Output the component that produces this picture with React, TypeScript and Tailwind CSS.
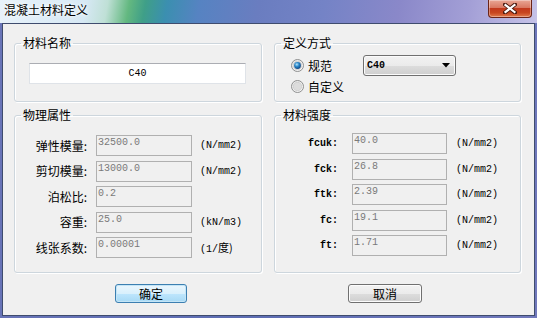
import React from "react";

const cjk = "font-['Noto_Sans_CJK_SC','Noto_Sans',sans-serif]";
const mono = "font-['Liberation_Mono',monospace]";

function Radio({ checked }: { checked: boolean }) {
  return (
    <svg width="13" height="13" viewBox="0 0 13 13" className="shrink-0">
      <defs>
        <linearGradient id={checked ? "rgc" : "rgu"} x1="0" y1="0" x2="1" y2="1">
          <stop offset="0" stopColor="#e6e6e6" />
          <stop offset="1" stopColor="#f8f8f8" />
        </linearGradient>
        <radialGradient id="dot" cx="0.4" cy="0.35" r="0.7">
          <stop offset="0" stopColor="#b6e4fb" />
          <stop offset="0.45" stopColor="#2b88c9" />
          <stop offset="1" stopColor="#0d3f7d" />
        </radialGradient>
      </defs>
      <circle cx="6.5" cy="6.5" r="6" fill={`url(#${checked ? "rgc" : "rgu"})`} stroke="#8e8f8f" strokeWidth="1" />
      <circle cx="6.5" cy="6.5" r="4.2" fill="#dcdcdc" stroke="#c4c4c4" strokeWidth="0.6" />
      {checked && <circle cx="6.5" cy="6.5" r="3.4" fill="url(#dot)" />}
    </svg>
  );
}

function Field({
  label,
  value,
  unit,
  labelCls,
  labelW,
  inputW,
  gapL,
  gapU,
}: {
  label: string;
  value: string;
  unit?: string;
  labelCls: string;
  labelW: string;
  inputW: string;
  gapL: string;
  gapU: string;
}) {
  return (
    <div className="flex items-center h-[21px]">
      <div className={`${labelW} text-right ${labelCls} text-black whitespace-pre`}>{label}</div>
      <div
        className={`${gapL} ${inputW} h-[21px] border border-[#b0b0b0] bg-[#f0f0f0] pl-[1px] ${mono} text-[10px] leading-[13px] text-[#7a7a7a]`}
      >
        {value}
      </div>
      {unit && (
        <div className={`${gapU} ${unit.includes("度") ? cjk + " text-[11px]" : mono + " text-[10px]"} text-black whitespace-pre`}>
          {unit.includes("度") ? (
            <span>
              <span className={`${mono} text-[10px]`}>(1/</span>度)
            </span>
          ) : (
            unit
          )}
        </div>
      )}
    </div>
  );
}

function Group({ title, h, children }: { title: string; h: string; children: React.ReactNode }) {
  return (
    <fieldset className={`${h} border border-[#cdd6dd] rounded-[3px] shadow-[inset_1px_1px_0_#ffffff,1px_1px_0_#ffffff] px-0`}>
      <legend className={`ml-[6px] px-[2px] ${cjk} text-[12px] leading-[16px] text-black`}>{title}</legend>
      {children}
    </fieldset>
  );
}

export default function App() {
  const leftRows = [
    ["弹性模量:", "32500.0", "(N/mm2)"],
    ["剪切模量:", "13000.0", "(N/mm2)"],
    ["泊松比:", "0.2", ""],
    ["容重:", "25.0", "(kN/m3)"],
    ["线张系数:", "0.00001", "(1/度)"],
  ];
  const rightRows = [
    ["fcuk:", "40.0"],
    ["fck:", "26.8"],
    ["ftk:", "2.39"],
    ["fc:", "19.1"],
    ["ft:", "1.71"],
  ];
  return (
    <div className="w-[537px] h-[318px] overflow-hidden bg-[linear-gradient(100deg,#6a75b8_0%,#5d6db3_50%,#7078bb_100%)] flex flex-col">
      {/* Title bar */}
      <div className="h-[23px] shrink-0 flex items-start justify-between bg-[linear-gradient(100deg,#e8f2fa_0%,#d6e8f4_16%,#bfe0d6_20%,#63b880_24%,#3f9f88_27%,#3b8fb0_31%,#5683c2_37%,#6a7dc0_48%,#7483c6_60%,#8a88c9_74%,#a39fd6_87%,#c6c3e8_100%)] pr-[5px]">
        <div className={`pl-[4px] pt-[2px] ${cjk} text-[12px] leading-[16px] text-black [text-shadow:0_0_6px_#ffffff,0_0_3px_#ffffff]`}>
          混凝土材料定义
        </div>
        <div className="w-[44px] h-[18px] rounded-b-[4px] border border-t-0 border-[#6b2418] bg-[linear-gradient(180deg,#e9a795_0%,#d97861_45%,#c2391c_50%,#c8461f_75%,#e07a4c_100%)] flex items-center justify-center shadow-[inset_0_0_0_1px_rgba(255,255,255,0.35)]">
          <svg width="14" height="11" viewBox="0 0 14 11">
            <path d="M2 1.5 L12 9.5 M12 1.5 L2 9.5" stroke="#4a1a10" strokeWidth="4" strokeLinecap="square" />
            <path d="M2.5 2 L11.5 9 M11.5 2 L2.5 9" stroke="#ffffff" strokeWidth="2.2" strokeLinecap="square" />
          </svg>
        </div>
      </div>

      {/* Client */}
      <div className="mx-[2px] h-[293px] border border-[#3f4c6e] bg-[#f0f0f0] pt-[11px] pl-[11px]">
        <div className="grid grid-cols-[248px_247px] gap-x-[12px] gap-y-[5px]">
          <Group title="材料名称" h="h-[67px]">
            <div className="pt-[12px] pl-[14px]">
              <div className={`w-[217px] h-[21px] bg-white border border-[#dfe3e8] border-t-[#abadb3] flex items-center justify-center ${mono} text-[10px] text-black`}>
                C40
              </div>
            </div>
          </Group>
          <Group title="定义方式" h="h-[67px]">
            <div className="pt-[4px] pl-[16px]">
              <div className="flex items-center h-[21px]">
                <Radio checked />
                <span className={`ml-[4px] ${cjk} text-[12px] text-black`}>规范</span>
                <div className="ml-[31px] w-[93px] h-[21px] rounded-[3px] border border-[#707070] bg-[linear-gradient(180deg,#f2f2f2_0%,#ebebeb_50%,#dddddd_51%,#cfcfcf_100%)] flex items-center justify-between pl-[3px] pr-[5px] shadow-[inset_0_0_0_1px_#fbfbfb]">
                  <span className={`${mono} text-[10px] font-bold text-black`}>C40</span>
                  <svg width="8" height="5" viewBox="0 0 8 5">
                    <path d="M0 0 H8 L4 4.5 Z" fill="#000" />
                  </svg>
                </div>
              </div>
              <div className="flex items-center h-[21px]">
                <Radio checked={false} />
                <span className={`ml-[4px] ${cjk} text-[12px] text-black`}>自定义</span>
              </div>
            </div>
          </Group>
          <Group title="物理属性" h="h-[166px]">
            <div className="pt-[12px] flex flex-col gap-y-[4.5px]">
              {leftRows.map(([l, v, u]) => (
                <Field
                  key={l}
                  label={l}
                  value={v}
                  unit={u}
                  labelCls={`${cjk} text-[12px]`}
                  labelW="w-[72px]"
                  inputW="w-[96px]"
                  gapL="ml-[9px]"
                  gapU="ml-[8px]"
                />
              ))}
            </div>
          </Group>
          <Group title="材料强度" h="h-[166px]">
            <div className="pt-[10px] flex flex-col gap-y-[4.5px]">
              {rightRows.map(([l, v]) => (
                <Field
                  key={l}
                  label={l}
                  value={v}
                  unit="(N/mm2)"
                  labelCls={`${mono} text-[10px] font-bold`}
                  labelW="w-[63px]"
                  inputW="w-[95px]"
                  gapL="ml-[14px]"
                  gapU="ml-[9px]"
                />
              ))}
            </div>
          </Group>
        </div>
        <div className="grid grid-cols-[248px_247px] gap-x-[12px] mt-[11px]">
          <div className="pl-[101px]">
            <div className="w-[72px] h-[19px] rounded-[3px] border border-[#3c7fb1] bg-[linear-gradient(180deg,#eaf6fd_0%,#d9f0fc_50%,#bee6fd_51%,#a7d9f5_100%)] shadow-[inset_0_0_0_1px_#c4e5f6] flex items-center justify-center">
              <span className={`${cjk} text-[12px] leading-[14px] text-black`}>确定</span>
            </div>
          </div>
          <div className="pl-[74px]">
            <div className="w-[74px] h-[19px] rounded-[3px] border border-[#707070] bg-[linear-gradient(180deg,#f2f2f2_0%,#ebebeb_50%,#dddddd_51%,#cfcfcf_100%)] shadow-[inset_0_0_0_1px_#fcfcfc] flex items-center justify-center">
              <span className={`${cjk} text-[12px] leading-[14px] text-black`}>取消</span>
            </div>
          </div>
        </div>
      </div>
    </div>
  );
}
